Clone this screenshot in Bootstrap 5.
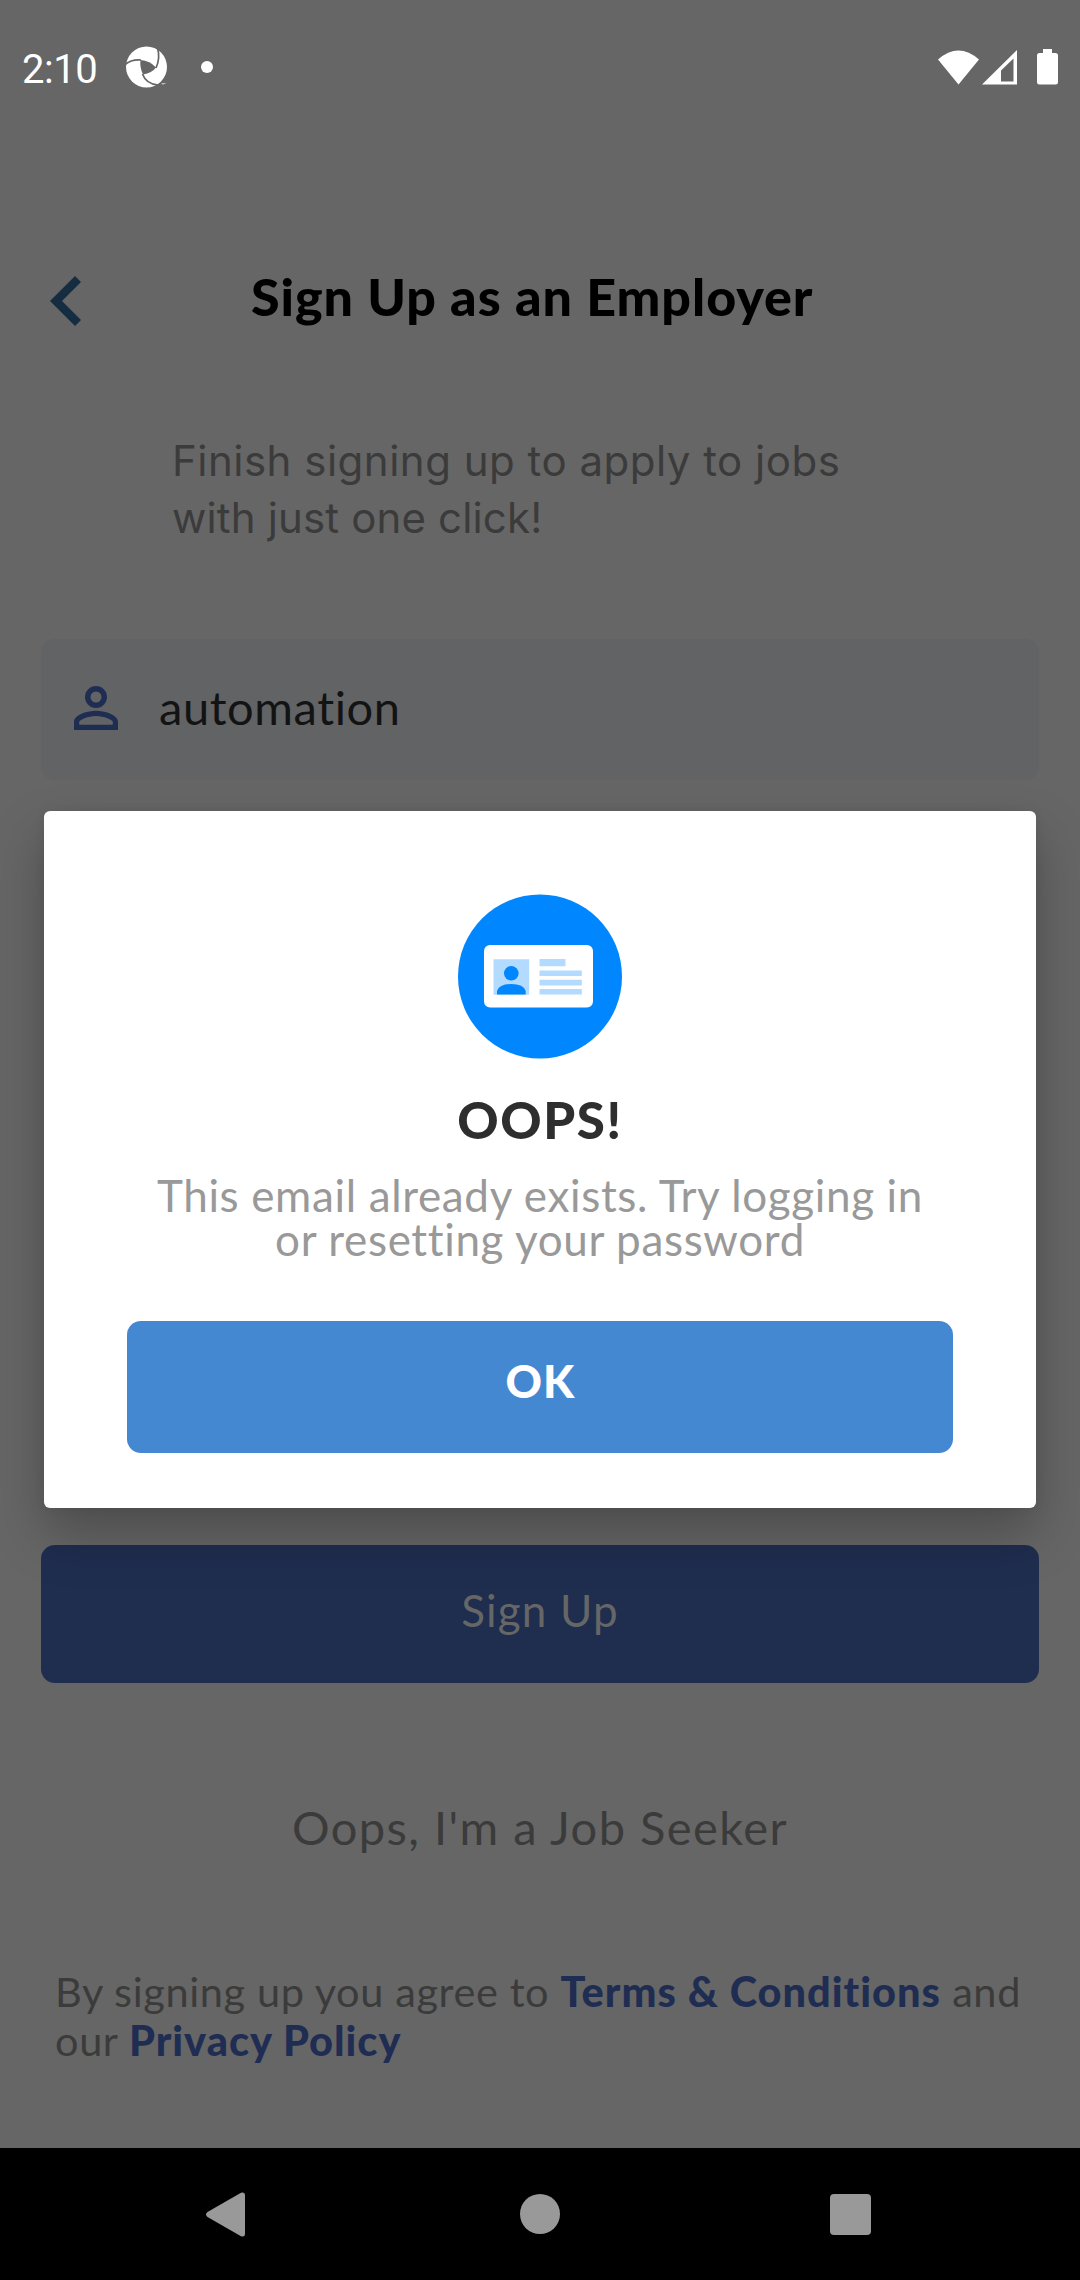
<!DOCTYPE html>
<html lang="en">
<head>
<meta charset="utf-8">
<meta name="viewport" content="width=device-width, initial-scale=1">
<title>Sign Up as an Employer</title>
<link href="https://cdn.jsdelivr.net/npm/bootstrap@5.3.0/dist/css/bootstrap.min.css" rel="stylesheet">
<style>
  body { background: #666; font-family: Lato, "Open Sans", sans-serif; color: #3b3b3b; }
  svg { display: block; flex: none; }
  .phone { width: 1080px; height: 2280px; background: #666; }
  .status-bar { height: 134px; padding: 0 22px 0 22px; color: #fff; }
  .clock { font: 400 40px/40px Roboto, sans-serif; padding-top: 6px; width: 102px; letter-spacing: -.5px; }
  .page-head { height: 82px; margin-top: 126px; padding-left: 50px; }
  .page-title { font-size: 52px; line-height: 60px; font-weight: 900; letter-spacing: .95px; color: #000; padding: 0 0 11px 170px; }
  .intro { font: 400 42px/57px Inter, "Open Sans", sans-serif; margin: 90px 0 0 172px; letter-spacing: .5px; }
  .intro-end { letter-spacing: .15px; }
  .field { height: 141px; margin: 93px 41px 0; padding: 0 0 3px 33px; border-radius: 14px; background: #616365; }
  .field-value { font-size: 47px; line-height: 60px; letter-spacing: .6px; color: #131313; margin-left: 41px; padding-bottom: 2px; }
  .btn-signup { height: 138px; margin: 765px 41px 0; padding: 0 0 8px; border: 0; border-radius: 14px; background: #1f2d4f; color: #666; font-size: 44px; letter-spacing: 1.2px; }
  .switch-role { font-size: 47px; line-height: 60px; letter-spacing: 1.45px; margin-top: 114px; }
  .legal { font-size: 41.5px; line-height: 49px; letter-spacing: .6px; margin: 110px 0 0 55px; }
  .legal b { font-weight: 900; letter-spacing: 1px; color: #1f2d52; }
  .nav-keys { height: 132px; background: #000; }
  .overlay { padding-top: 811px; }
  .dialog { width: 992px; height: 697px; padding: 83px 83px 0; border-radius: 6px; background: #fff; box-shadow: 0 26px 52px rgba(0,0,0,.25), 0 0 12px rgba(0,0,0,.06); }
  .dialog-title { font-size: 51px; line-height: 60px; font-weight: 900; letter-spacing: 1.6px; color: #2e2e2e; margin-top: 31px; }
  .dialog-text { font-size: 44px; line-height: 44px; letter-spacing: .65px; color: #999; margin-top: 23px; }
  .btn-ok { height: 132px; margin-top: 60px; padding: 0 0 10px 1px; border: 0; border-radius: 14px; background: #4588d2; color: #fff; font-size: 45px; font-weight: 900; letter-spacing: 1px; }
</style>
<script src="https://cdn.jsdelivr.net/npm/bootstrap@5.3.0/dist/js/bootstrap.bundle.min.js"></script>
</head>
<body>
<div class="phone position-relative overflow-hidden d-flex flex-column">
  <header class="status-bar d-flex align-items-center justify-content-between">
    <div class="d-flex align-items-center">
      <span class="clock">2:10</span>
      <svg width="45" height="42" viewBox="0 0 45 42">
        <circle cx="22.500" cy="21" r="20.5" fill="#fff"/>
        <path d="M16.500 14Q26 14.500 32 21.500Q28 27 19 28.500Q15.500 21 16.500 14Z" fill="#666"/>
        <g fill="none" stroke="#666" stroke-width="1.7">
          <path d="M1 18.500Q8 13 17 14"/>
          <path d="M32 22Q36.500 12 33.500 2"/>
          <path d="M18.500 28Q22 38 34 39"/>
        </g>
        <path d="M37.500 37.500h4M39 37v2" stroke="#bbb" fill="none"/>
      </svg>
      <svg width="12" height="12" viewBox="0 0 12 12" style="margin-left:32px"><circle cx="6" cy="6" r="6" fill="#fff"/></svg>
    </div>
    <svg width="120" height="36" viewBox="938 49 120 36" fill="#fff">
      <path d="M938 59.500Q958.500 41.500 979 59.500L958.500 84.500Z"/>
      <path fill-rule="evenodd" d="M982 84.500L1017 50V84.500ZM1001 81.500H1013.500V58.500L1001 70.500Z"/>
      <path d="M1043 49h9v4h3.500q2.500 0 2.500 2.500V82q0 2.500-2.500 2.500h-16q-2.500 0-2.500-2.500V55.500q0-2.500 2.500-2.500h3.500z"/>
    </svg>
  </header>

  <div class="page-head d-flex align-items-center">
    <svg width="31" height="50" viewBox="0 0 31 50"><path d="M25 0L31 6L12 25L31 44L25 50L0 25Z" fill="#152c41"/></svg>
    <h1 class="page-title m-0">Sign Up as an Employer</h1>
  </div>

  <p class="intro mb-0">Finish signing up to apply to jobs<br><span class="intro-end">with just one click!</span></p>

  <div class="field d-flex align-items-center">
    <svg width="44" height="44" viewBox="4 4 16 16" fill="#1f2d52"><path d="M12 6a2 2 0 1 1 0 4 2 2 0 0 1 0-4m0-2a4 4 0 1 0 0 8 4 4 0 0 0 0-8m0 9c-2.670 0-8 1.340-8 4v3h16v-3c0-2.660-5.330-4-8-4m6.100 5.100H5.900V17c0-.640 3.130-2.100 6.100-2.100s6.100 1.460 6.100 2.100z"/></svg>
    <span class="field-value">automation</span>
  </div>

  <button class="btn btn-signup" type="button">Sign Up</button>
  <div class="switch-role text-center">Oops, I'm a Job Seeker</div>
  <p class="legal mb-0">By signing up you agree to <b>Terms &amp; Conditions</b> and<br>our <b>Privacy Policy</b></p>

  <nav class="nav-keys mt-auto">
    <svg width="1080" height="132" viewBox="0 2148 1080 132" fill="#999">
      <path d="M207.500 2212L241 2192.700Q245 2191.500 245 2195V2234Q245 2237.500 241 2236.300L207.500 2217Q204.500 2214.500 207.500 2212Z"/>
      <circle cx="540" cy="2214" r="20"/>
      <rect x="830" y="2194" width="41" height="41" rx="4"/>
    </svg>
  </nav>

  <div class="overlay position-absolute top-0 start-0 w-100 d-flex justify-content-center">
    <section class="dialog d-flex flex-column text-center" role="dialog">
      <svg class="mx-auto" width="165" height="165" viewBox="458 894 165 165">
        <circle cx="540" cy="976.500" r="82" fill="#0087ff"/>
        <rect x="484" y="945" width="109" height="62.500" rx="6" fill="#fff"/>
        <path d="M493.500 959.300h35.700v35.500h-35.700zM539.500 959h26v7.200h-26zM539.500 970.500h42.300v5.600h-42.300zM539.500 979.800h42.300v5.600h-42.300zM539.500 989h42.300v5.600h-42.300z" fill="#b2dbff"/>
        <circle cx="511.300" cy="973.300" r="7.300" fill="#0087ff"/>
        <path d="M497 994.500V991Q499 984 511.300 984T525.700 991V994.500Z" fill="#0087ff"/>
      </svg>
      <h2 class="dialog-title mb-0">OOPS!</h2>
      <p class="dialog-text mb-0">This email already exists. Try logging in<br>or resetting your password</p>
      <button class="btn btn-ok" type="button">OK</button>
    </section>
  </div>
</div>
</body>
</html>
